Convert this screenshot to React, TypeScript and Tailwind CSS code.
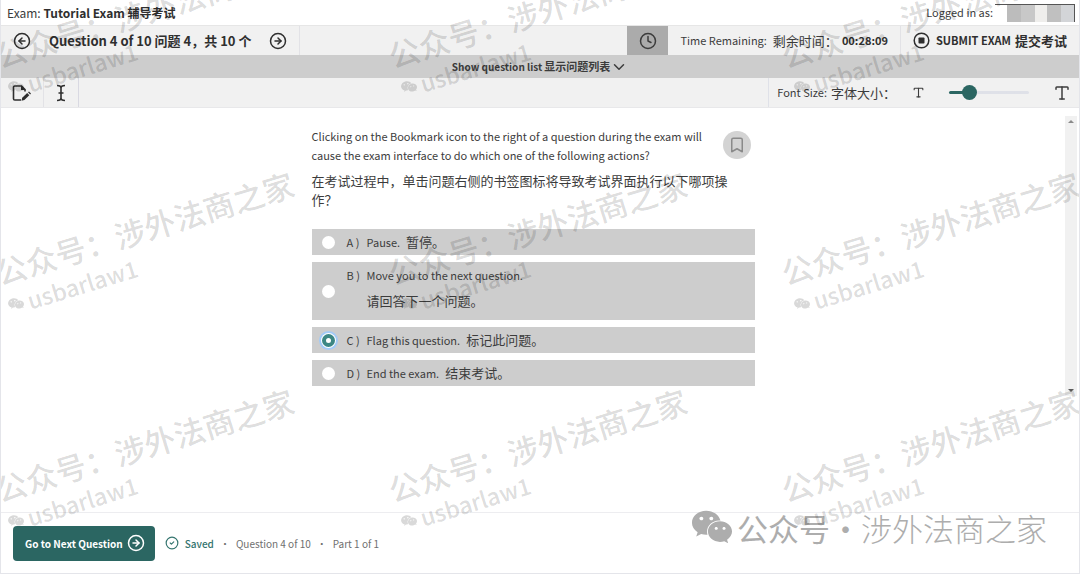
import React, { useState } from "react";
import {
  Bookmark,
  ChevronDown,
  CircleArrowLeft,
  CircleArrowRight,
  CircleCheck,
  Clock,
  Type,
} from "lucide-react";
import { FaWeixin } from "react-icons/fa";

const options = [
  { letter: "A", en: "Pause.", zh: "暂停。", stacked: false },
  { letter: "B", en: "Move you to the next question.", zh: "请回答下一个问题。", stacked: true },
  { letter: "C", en: "Flag this question.", zh: "标记此问题。", stacked: false },
  { letter: "D", en: "End the exam.", zh: "结束考试。", stacked: false },
];

const NoteIcon = () => (
  <svg width="20" height="18" viewBox="0 0 20 18" fill="none" aria-hidden="true">
    <path
      d="M9 16H2.8A1.3 1.3 0 0 1 1.5 14.7V3.3A1.3 1.3 0 0 1 2.8 2H9.5L13 5.5V7.5"
      stroke="#2f2f2f"
      strokeWidth="1.6"
    />
    <path d="M9 1.5V6H13.5Z" fill="#2f2f2f" />
    <path d="M9.5 16.8L10.2 13.8L15.2 9L17.3 11.2L12.4 16Z" fill="#2f2f2f" />
    <path d="M16 8.3L17 7.4L19 9.5L18.1 10.4Z" fill="#2f2f2f" />
  </svg>
);

const CursorIcon = () => (
  <svg width="10" height="18" viewBox="0 0 10 18" fill="none" stroke="#2f2f2f" strokeWidth="1.6" aria-hidden="true">
    <path d="M1 1.5C3 1.5 5 2 5 4V14C5 16 3 16.5 1 16.5M9 1.5C7 1.5 5 2 5 4M5 14C5 16 7 16.5 9 16.5M2.5 9H7.5" />
  </svg>
);

const StopIcon = () => (
  <svg width="17" height="17" viewBox="0 0 17 17" fill="none" aria-hidden="true">
    <circle cx="8.5" cy="8.5" r="7.3" stroke="#2f2f2f" strokeWidth="1.5" />
    <rect x="5.5" y="5.5" width="6" height="6" rx="0.8" fill="#2f2f2f" />
  </svg>
);

const Watermark = () => (
  <div className="pointer-events-none absolute inset-0 overflow-hidden text-black/15" aria-hidden="true">
    {[0, 1, 2].map((row) =>
      [0, 1, 2].map((col) => (
        <div
          key={`${row}-${col}`}
          className="absolute w-80 origin-top-left -rotate-[17deg] whitespace-nowrap"
          style={{ left: col * 393 - 10, top: row * 217 + 39 }}
        >
          <p className="text-[31px] leading-[36px] font-medium">公众号：涉外法商之家</p>
          <p className="flex items-center gap-1 pl-0.5 text-[23px] leading-[34px] font-medium">
            <FaWeixin className="size-4" />
            usbarlaw1
          </p>
        </div>
      ))
    )}
  </div>
);

const App = () => {
  const [answer, setAnswer] = useState("C");
  const [fontSize, setFontSize] = useState(20);

  return (
    <div className="relative flex min-h-screen flex-col border-x border-b border-[#e4e5ea] bg-white font-['Noto_Sans_CJK_SC',sans-serif] text-[#3c3c3c]">
      <header>
        <div className="flex h-[25px] items-center justify-between pr-1 pl-1.5 text-[12px]">
          <p>
            Exam: <b className="text-[#2f2f2f]">Tutorial Exam 辅导考试</b>
          </p>
          <div className="flex items-center gap-0.5">
            <span className="text-[11px]">Logged in as:</span>
            <div className="flex h-[18px] w-20 border-t border-r border-[#555]">
              <span className="w-3" />
              <span className="w-3.5 bg-[#bcbcbc]" />
              <span className="w-3.5 bg-[#c8c8c8]" />
              <span className="w-3 bg-[#efeeec]" />
              <span className="w-3.5 bg-[#c0c0c0]" />
              <span className="flex-1 bg-[#d3d5d8]" />
            </div>
          </div>
        </div>

        <div className="flex h-[30px] items-stretch justify-between border-t border-[#e6e6e6] bg-[#f1f1f1]">
          <div className="flex items-center gap-[18px] border-r border-[#e2e2e6] px-3">
            <button type="button" aria-label="Previous question">
              <CircleArrowLeft className="size-[18px] text-[#2f2f2f]" />
            </button>
            <h1 className="text-[13px] font-bold text-[#2f2f2f]">Question 4 of 10 问题 4，共 10 个</h1>
            <button type="button" aria-label="Next question">
              <CircleArrowRight className="size-[18px] text-[#2f2f2f]" />
            </button>
          </div>
          <div className="flex items-stretch">
            <button type="button" aria-label="Toggle timer" className="flex w-[41px] items-center justify-center bg-[#ababab]">
              <Clock className="size-[18px]" />
            </button>
            <p className="flex items-center border-r border-[#e2e2e6] px-3 text-[11px]">
              Time Remaining:
              <span className="ml-1.5 text-[13px]">剩余时间：</span>
              <b className="ml-1 text-[#2f2f2f]">00:28:09</b>
            </p>
            <button type="button" className="flex items-center px-3 text-[11px] font-bold text-[#2f2f2f]">
              <StopIcon />
              <span className="ml-1.5">SUBMIT EXAM</span>
              <span className="ml-1 text-[13px]">提交考试</span>
            </button>
          </div>
        </div>

        <button
          type="button"
          className="flex h-[23px] w-full items-center justify-center bg-[#cdcdcd] text-[10px] font-bold"
        >
          Show question list
          <span className="ml-0.5 text-[11px]">显示问题列表</span>
          <ChevronDown className="size-[18px]" />
        </button>

        <div className="flex h-[30px] items-stretch justify-between border-b border-[#e8e8ea] bg-[#f1f1f1]">
          <div className="flex">
            <button type="button" aria-label="Notes" className="flex w-[43px] items-center justify-center border-r border-[#e2e2e6]">
              <NoteIcon />
            </button>
            <button type="button" aria-label="Select text" className="flex w-[35px] items-center justify-center border-r border-[#d9d9e2]">
              <CursorIcon />
            </button>
          </div>
          <div className="flex items-center border-l border-[#dfe1e8] px-2 text-[11px]">
            <label htmlFor="font-size" className="flex items-center gap-1">
              Font Size: <span className="text-[13px]">字体大小：</span>
            </label>
            <Type className="ml-4 size-[13px]" />
            <input
              id="font-size"
              type="range"
              min={0}
              max={100}
              value={fontSize}
              onChange={(e) => setFontSize(Number(e.target.value))}
              className="mx-6 h-[3px] w-20 appearance-none rounded-full bg-linear-to-r from-[#2b6662] from-25% to-[#dfe1e8] to-25% [&::-webkit-slider-thumb]:size-[15px] [&::-webkit-slider-thumb]:appearance-none [&::-webkit-slider-thumb]:rounded-full [&::-webkit-slider-thumb]:bg-[#2b6662]"
            />
            <Type className="size-[18px]" />
          </div>
        </div>
      </header>

      <main className="flex flex-1 items-start pt-2 pr-0.5">
        <div className="flex-1 pt-[11px] pb-2.5">
          <div className="mx-auto w-full max-w-[443px] text-[11px]">
            <div className="flex items-start justify-between pr-1">
              <p className="leading-[19px]">
                Clicking on the Bookmark icon to the right of a question during the exam will
                <br />
                cause the exam interface to do which one of the following actions?
              </p>
              <button
                type="button"
                aria-label="Bookmark this question"
                className="mt-1 flex size-7 shrink-0 items-center justify-center rounded-full bg-[#d3d3d3]"
              >
                <Bookmark className="size-[18px] text-[#8a8a8a]" />
              </button>
            </div>
            <p className="mt-1.5 pr-6 text-[13px] leading-[19px]">
              在考试过程中，单击问题右侧的书签图标将导致考试界面执行以下哪项操作？
            </p>

            <div role="radiogroup" aria-label="Answers" className="mt-5 flex flex-col gap-[7px]">
              {options.map(({ letter, en, zh, stacked }) => (
                <label key={letter} className="flex items-center bg-[#cdcdcd] pl-[10px]">
                  <input
                    type="radio"
                    name="answer"
                    checked={answer === letter}
                    onChange={() => setAnswer(letter)}
                    className="size-[13px] appearance-none rounded-full bg-white ring-offset-1 checked:border-4 checked:border-[#3c8784] checked:ring-2 checked:ring-[#a3cbf7]"
                  />
                  <span className="ml-3 w-5 self-start leading-[26px] whitespace-nowrap">{letter} )</span>
                  <span
                    className={
                      stacked
                        ? "flex flex-col pb-[6px] leading-[26px]"
                        : "flex items-center gap-1.5 leading-[26px]"
                    }
                  >
                    <span>{en}</span>
                    <span className="text-[13px]">{zh}</span>
                  </span>
                </label>
              ))}
            </div>
          </div>
        </div>
        <div className="flex w-3 flex-col items-center justify-between self-start bg-[#f1f1f1] py-1" aria-hidden="true">
          <span className="border-x-[3px] border-b-[3px] border-x-transparent border-b-[#8a8a8a]" />
          <span className="h-[266px]" />
          <span className="border-x-[3px] border-t-[3px] border-x-transparent border-t-[#5a5a5a]" />
        </div>
      </main>

      <footer className="flex h-[61px] items-center justify-between border-t border-[#ededf0] pr-8 pl-3 text-[10px] text-[#6f6f6f]">
        <div className="flex items-center">
          <button
            type="button"
            className="flex h-[35px] items-center gap-1 rounded bg-[#2b6662] pr-2.5 pl-3 font-bold text-white"
          >
            Go to Next Question
            <CircleArrowRight className="size-[18px]" />
          </button>
          <CircleCheck className="ml-2.5 size-3.5 text-[#35756f]" />
          <span className="ml-1.5 font-medium text-[#35756f]">Saved</span>
          <span className="mx-1.5">•</span>
          <span>Question 4 of 10</span>
          <span className="mx-1.5">•</span>
          <span>Part 1 of 1</span>
        </div>
        <div className="flex items-center pb-8 text-[31px] leading-none text-[#adadad]">
          <FaWeixin className="mr-1 size-[42px]" />
          <span>公众号</span>
          <span>·</span>
          <span className="font-light">涉外法商之家</span>
        </div>
      </footer>

      <Watermark />
    </div>
  );
};

export default App;
